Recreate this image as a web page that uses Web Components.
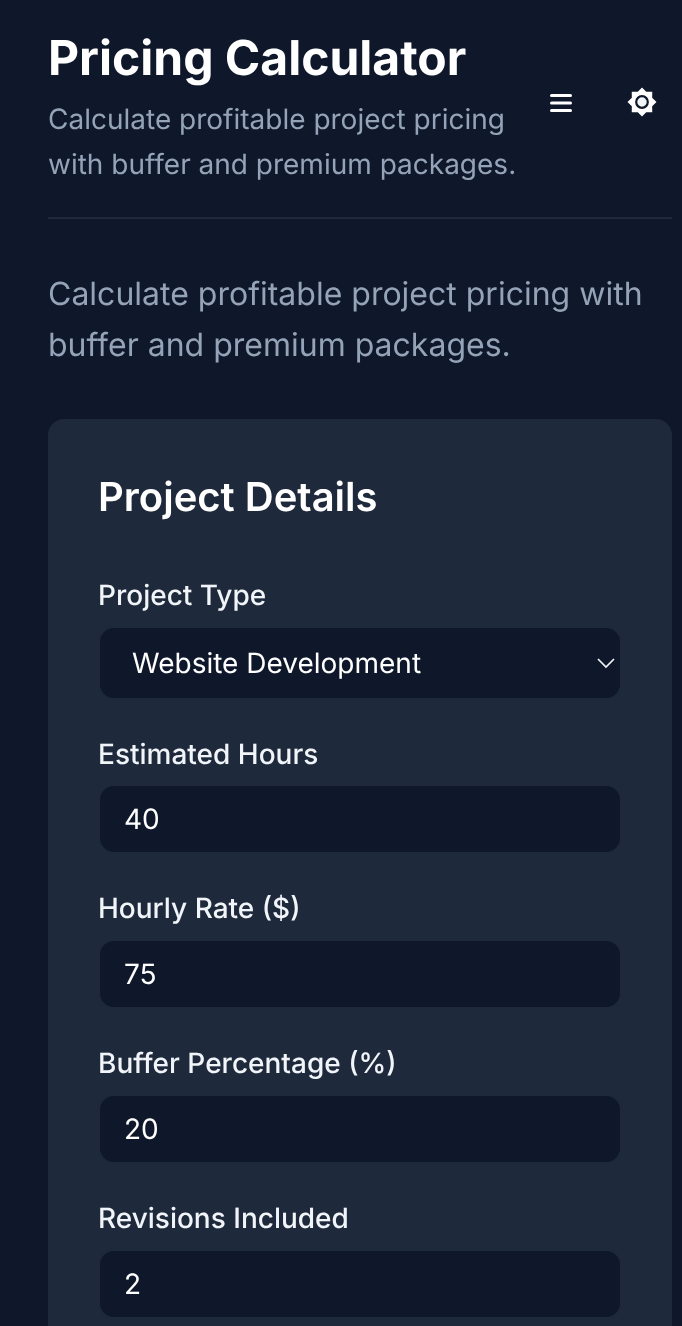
<!DOCTYPE html>
<html>
<head>
<meta charset="utf-8">
<title>Pricing Calculator</title>
<style>
  html, body { margin: 0; background: #0f172a; }
  body { font-family: Inter, "Liberation Sans", sans-serif; color: #fff; height: 1326px; overflow: hidden; text-rendering: geometricPrecision; }
</style>
</head>
<body>
<calc-page>
  <calc-header title="Pricing Calculator" subtitle="Calculate profitable project pricing with buffer and premium packages."></calc-header>
  <p>Calculate profitable project pricing with buffer and premium packages.</p>
  <calc-card title="Project Details">
    <calc-field label="Project Type" value="Website Development" select></calc-field>
    <calc-field label="Estimated Hours" value="40" tight></calc-field>
    <calc-field label="Hourly Rate ($)" value="75"></calc-field>
    <calc-field label="Buffer Percentage (%)" value="20"></calc-field>
    <calc-field label="Revisions Included" value="2"></calc-field>
  </calc-card>
</calc-page>
<script>
class CalcPage extends HTMLElement {
  connectedCallback() {
    const shadowRoot = this.attachShadow({ mode: "open" });
    shadowRoot.innerHTML = `
      <style>
        :host { display: block; padding: 0 10px 0 48px; will-change: transform; }
        ::slotted(p) {
          margin: 49px 0 49px;
          font-size: 32px;
          line-height: 51.2px;
          color: #94a3b8;
        }
      </style>
      <slot></slot>`;
  }
}

class CalcHeader extends HTMLElement {
  connectedCallback() {
    const shadowRoot = this.attachShadow({ mode: "open" });
    shadowRoot.innerHTML = `
      <style>
        :host {
          display: flex;
          align-items: center;
          justify-content: space-between;
          height: 219px;
          box-sizing: border-box;
          padding-top: 29px;
          padding-bottom: 31px;
          border-bottom: 2px solid #1e293b;
        }
        .text { width: 480px; }
        h1 { margin: 0 0 10px; font-size: 48px; line-height: 58px; font-weight: 700; color: #fff; white-space: nowrap; }
        p { margin: 0; font-size: 28px; line-height: 45px; color: #94a3b8; }
        .actions { display: flex; align-items: center; gap: 49px; margin: 0 14px 12px 0; }
        svg { display: block; }
      </style>
      <div class="text">
        <h1>${this.getAttribute("title")}</h1>
        <p>${this.getAttribute("subtitle")}</p>
      </div>
      <div class="actions">
        <svg width="32" height="32" viewBox="0 0 32 32" fill="none" stroke="#fff" stroke-width="3" stroke-linecap="round">
          <path d="M6.500 9.500h19M6.500 17h19M6.500 24.500h19"/>
        </svg>
        <svg width="32" height="32" viewBox="0 0 32 32">
          <polygon fill="#fff" points="16,1.500 20.210,5.840 26.250,5.750 26.160,11.790 30.500,16 26.160,20.210 26.250,26.250 20.210,26.160 16,30.500 11.790,26.160 5.750,26.250 5.840,20.210 1.500,16 5.840,11.790 5.750,5.750 11.790,5.840"/>
          <circle cx="16" cy="16" r="5.800" fill="#f1f5f9" stroke="#0f172a" stroke-width="2.200"/>
        </svg>
      </div>`;
  }
}

class CalcCard extends HTMLElement {
  connectedCallback() {
    const shadowRoot = this.attachShadow({ mode: "open" });
    shadowRoot.innerHTML = `
      <style>
        :host {
          display: block;
          background: #1e293b;
          border-radius: 16px;
          padding: 50px;
          height: 1000px;
          box-sizing: border-box;
        }
        h2 { margin: 0 0 50px; font-size: 40px; line-height: 56px; font-weight: 600; color: #fff; }
        .fields { display: flex; flex-direction: column; gap: 35px; }
      </style>
      <h2>${this.getAttribute("title")}</h2>
      <div class="fields"><slot></slot></div>`;
  }
}

class CalcField extends HTMLElement {
  connectedCallback() {
    const isSelect = this.hasAttribute("select");
    const shadowRoot = this.attachShadow({ mode: "open" });
    shadowRoot.innerHTML = `
      <style>
        :host { display: block; }
        :host([select]) { margin-bottom: -1px; }
        :host([tight]) { margin-top: 1px; }
        .label { font-size: 28px; line-height: 39px; font-weight: 500; color: #f1f5f9; margin-bottom: 11px; }
        :host([select]) .label { line-height: 40px; }
        :host([tight]) .label { margin-bottom: 10px; }
        .control {
          display: flex;
          align-items: center;
          justify-content: space-between;
          height: 70px;
          box-sizing: border-box;
          border: 2px solid #1e293b;
          border-radius: 16px;
          background: #0f172a;
          padding: 0 24px;
          font-size: 28px;
          color: #fff;
        }
        .control.select { padding: 0 4px 0 32px; height: 74px; }
        svg { display: block; }
      </style>
      <div class="label">${this.getAttribute("label")}</div>
      <div class="control ${isSelect ? "select" : ""}">
        <span>${this.getAttribute("value")}</span>
        ${isSelect ? `<svg width="20" height="12" viewBox="0 0 20 12" fill="none" stroke="#f1f5f9" stroke-width="1.700"><path d="M2 2l8 8 8-8"/></svg>` : ""}
      </div>`;
  }
}

customElements.define("calc-page", CalcPage);
customElements.define("calc-header", CalcHeader);
customElements.define("calc-card", CalcCard);
customElements.define("calc-field", CalcField);
</script>
</body>
</html>
